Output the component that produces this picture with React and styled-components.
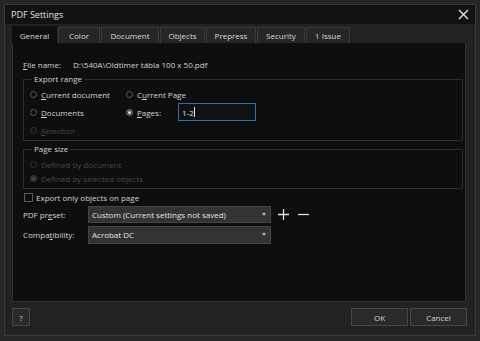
import React from 'react';
import styled, { createGlobalStyle } from 'styled-components';

const Global = createGlobalStyle`
  html, body { margin: 0; padding: 0; background: #262626; }
  * { box-sizing: border-box; }
`;

const Frame = styled.div`
  width: 480px;
  height: 341px;
  padding: 4px 4px 5px 4px;
  background: #262626;
  font-family: "Open Sans", "Noto Sans", sans-serif;
  font-size: 8px;
  color: #d4d4d4;
`;

const Window = styled.div`
  height: 100%;
  display: flex;
  flex-direction: column;
  border: 1px solid #3a3a3a;
  background: #222222;
`;

const TitleBar = styled.div`
  height: 19px;
  flex: none;
  display: flex;
  align-items: center;
  justify-content: space-between;
  padding: 0 6px 0 6px;
  background: #121212;
  font-size: 9px;
  color: #e2e2e2;
`;

const Tabs = styled.div`
  height: 19px;
  flex: none;
  display: flex;
  align-items: flex-end;
  gap: 1px;
  padding-left: 7px;
`;

const Tab = styled.div`
  width: ${p => p.$w}px;
  height: ${p => (p.$active ? '17px' : '16px')};
  display: flex;
  align-items: center;
  justify-content: center;
  background: ${p => (p.$active ? '#0e0e0e' : '#262626')};
  border: 1px solid ${p => (p.$active ? '#0e0e0e' : '#3a3a3a')};
  border-bottom: none;
  color: #d8d8d8;
`;

const Panel = styled.div`
  flex: 1;
  margin: 0 9px 0 7px;
  background: #0e0e0e;
  border: 1px solid #303030;
  border-top: none;
  padding: 13px 2px 0 10px;
  display: flex;
  flex-direction: column;
`;

const Row = styled.div`
  height: ${p => p.$h || 18}px;
  display: flex;
  align-items: center;
  white-space: nowrap;
  color: ${p => (p.$disabled ? '#464646' : '#d4d4d4')};
`;

const FileLabel = styled.span`
  width: 50px;
`;

const Group = styled.fieldset`
  margin: ${p => p.$mt}px 0 0 0;
  padding: ${p => p.$pt}px 0 ${p => p.$pb}px 6px;
  border: 1px solid #2e2e2e;
  min-width: 0;
`;

const Legend = styled.legend`
  padding: 0 2px;
  margin-left: 2px;
  line-height: 10px;
  color: #d4d4d4;
`;

const RadioGrid = styled.div`
  display: grid;
  grid-template-columns: ${p => p.$cols};
  grid-auto-rows: ${p => p.$rh}px;
  align-items: center;
`;

const Radio = styled.span`
  width: 7px;
  height: 7px;
  border-radius: 50%;
  border: 1px solid ${p => (p.$disabled ? '#363636' : '#5a5a5a')};
  background: ${p => (p.$checked ? (p.$disabled ? '#4a4a4a' : '#e6e6e6') : '#0e0e0e')};
  box-shadow: ${p => (p.$checked ? 'inset 0 0 0 1px #2a2a2a' : 'none')};
  margin-right: 4px;
  flex: none;
`;

const U = styled.span`
  text-decoration: underline;
  text-underline-offset: 1px;
`;

const PageInput = styled.div`
  width: 78px;
  height: 18px;
  margin-left: 17px;
  border: 1px solid #2f6fb4;
  background: #111;
  display: flex;
  align-items: center;
  padding-left: 3px;
  color: #e0e0e0;
`;

const Caret = styled.span`
  width: 1px;
  height: 10px;
  background: #e0e0e0;
`;

const Check = styled.span`
  width: 9px;
  height: 9px;
  border: 1px solid #5a5a5a;
  margin: 0 3px 0 1px;
  background: #0e0e0e;
`;

const FieldLabel = styled.span`
  width: 65px;
  flex: none;
`;

const Select = styled.div`
  width: 183px;
  height: ${p => p.$h}px;
  background: #333333;
  border: 1px solid #444444;
  display: flex;
  align-items: center;
  justify-content: space-between;
  padding: 0 4px 0 3px;
  color: #e2e2e2;
`;

const Arrow = styled.span`
  width: 0;
  height: 0;
  border-left: 2.5px solid transparent;
  border-right: 2.5px solid transparent;
  border-top: 3px solid #bbbbbb;
`;

const IconBtn = styled.span`
  display: flex;
  align-items: center;
  margin-left: ${p => p.$ml}px;
`;

const Footer = styled.div`
  height: 33px;
  flex: none;
  display: flex;
  align-items: center;
  padding: 0 8px 3px 7px;
  gap: 2px;
`;

const Button = styled.div`
  width: ${p => p.$w}px;
  height: 18px;
  background: #2a2a2a;
  border: 1px solid #474747;
  display: flex;
  align-items: center;
  justify-content: center;
  color: #d0d0d0;
  margin-left: ${p => (p.$push ? 'auto' : '0')};
`;

const tabs = [
  ['General', 45],
  ['Color', 42],
  ['Document', 58],
  ['Objects', 45],
  ['Prepress', 50],
  ['Security', 48],
  ['1 Issue', 44],
];

export default function App() {
  return (
    <Frame>
      <Global />
      <Window>
        <TitleBar>
          <span>PDF Settings</span>
          <svg width="11" height="11" viewBox="0 0 11 11">
            <path d="M1 1L10 10M10 1L1 10" stroke="#e6e6e6" strokeWidth="1.4" />
          </svg>
        </TitleBar>
        <Tabs>
          {tabs.map(([t, w], i) => (
            <Tab key={t} $active={i === 0} $w={w}>{t}</Tab>
          ))}
        </Tabs>
        <Panel>
          <Row $h={16}>
            <FileLabel><U>F</U>ile name:</FileLabel>
            <span>D:\540A\Oldtimer tábla 100 x 50.pdf</span>
          </Row>
          <Group $mt={2} $pt={1} $pb={1}>
            <Legend>Export range</Legend>
            <RadioGrid $rh={18} $cols="96px auto">
              <Row><Radio /><span><U>C</U>urrent document</span></Row>
              <Row><Radio />C<U>u</U>rrent Page</Row>
              <Row><Radio /><U>D</U>ocuments</Row>
              <Row>
                <Radio $checked /><U>P</U>ages:
                <PageInput>1-2<Caret /></PageInput>
              </Row>
              <Row $disabled><Radio $disabled /><U>S</U>election</Row>
            </RadioGrid>
          </Group>
          <Group $mt={3} $pt={3} $pb={3}>
            <Legend>Page size</Legend>
            <RadioGrid $rh={14} $cols="auto">
              <Row $disabled $h={14}><Radio $disabled />Defined by document</Row>
              <Row $disabled $h={14}><Radio $disabled $checked />Defined by selected objects</Row>
            </RadioGrid>
          </Group>
          <Row $h={17}>
            <Check />Export only objects on page
          </Row>
          <Row $h={17}>
            <FieldLabel>PDF pr<U>e</U>set:</FieldLabel>
            <Select $h={17}>Custom (Current settings not saved)<Arrow /></Select>
            <IconBtn $ml={6}>
              <svg width="13" height="13" viewBox="0 0 13 13">
                <path d="M6.5 1V12M1 6.5H12" stroke="#e0e0e0" strokeWidth="1.3" />
              </svg>
            </IconBtn>
            <IconBtn $ml={7}>
              <svg width="13" height="13" viewBox="0 0 13 13">
                <path d="M1 6.5H12" stroke="#e0e0e0" strokeWidth="1.3" />
              </svg>
            </IconBtn>
          </Row>
          <Row $h={23}>
            <FieldLabel>Compa<U>t</U>ibility:</FieldLabel>
            <Select $h={18}>Acrobat DC<Arrow /></Select>
          </Row>
        </Panel>
        <Footer>
          <Button $w={18}>?</Button>
          <Button $w={57} $push>OK</Button>
          <Button $w={57}>Cancel</Button>
        </Footer>
      </Window>
    </Frame>
  );
}
